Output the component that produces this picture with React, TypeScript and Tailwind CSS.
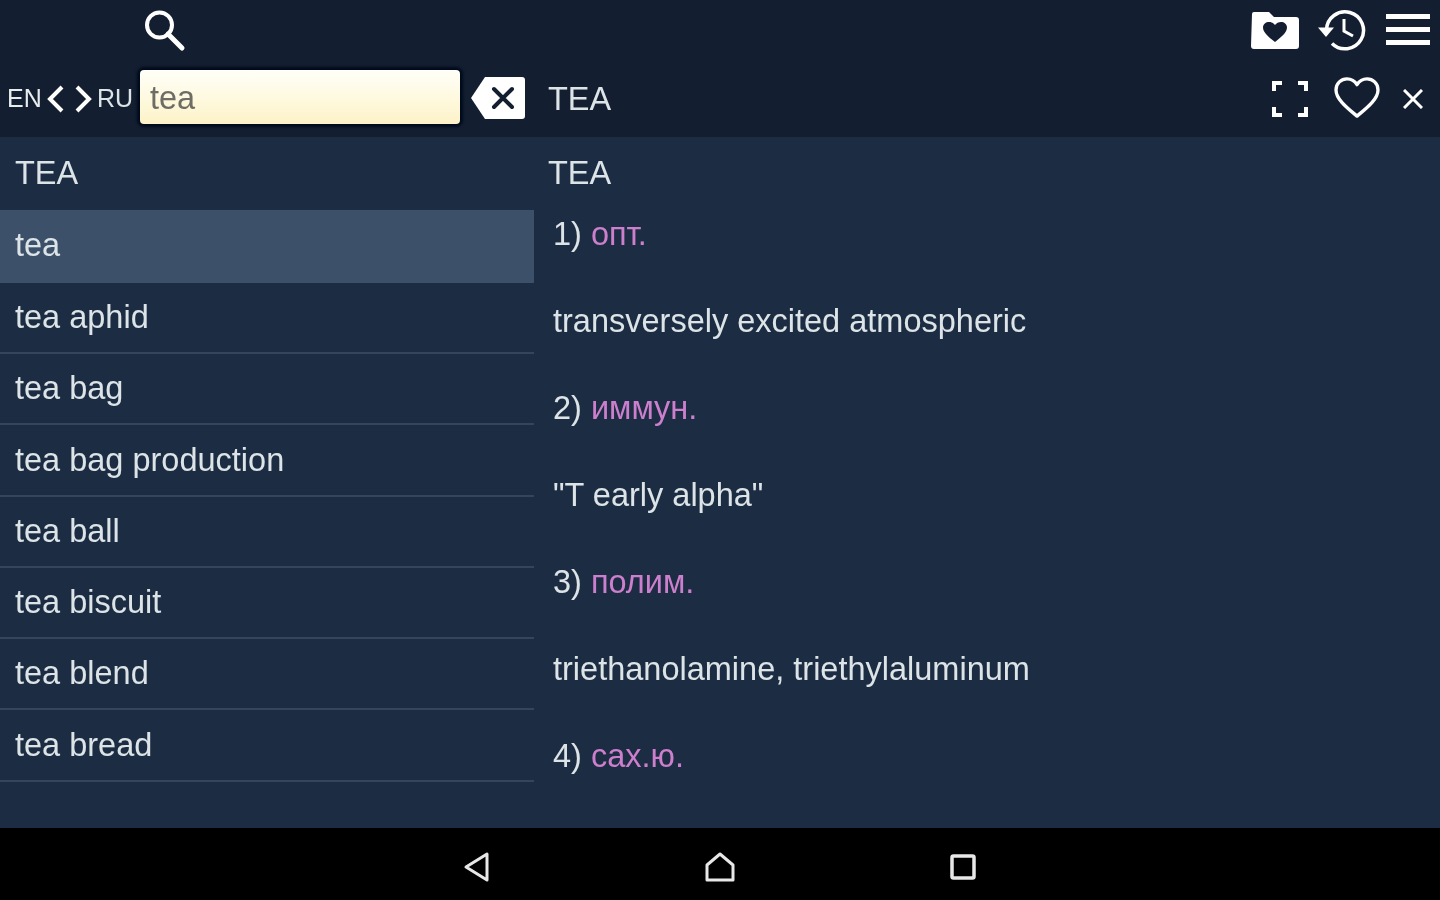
const F = "font-['Liberation_Sans',Arial,sans-serif]";

const rows = ["tea aphid", "tea bag", "tea bag production", "tea ball", "tea biscuit", "tea blend", "tea bread"];

const defs: [string, string, string][] = [
  ["1)", "опт.", "transversely excited atmospheric"],
  ["2)", "иммун.", "\"T early alpha\""],
  ["3)", "полим.", "triethanolamine, triethylaluminum"],
];

function Search() {
  return (
    <svg width="44" height="44" viewBox="0 0 44 44" fill="none" stroke="#fff" strokeWidth="4">
      <circle cx="17.5" cy="17" r="12.5" />
      <path d="M26 26l14 14" strokeWidth="5" strokeLinecap="round" />
    </svg>
  );
}

function FolderHeart() {
  return (
    <svg width="50" height="38" viewBox="0 0 50 38">
      <path d="M2 3a2 2 0 0 1 2-2h15l5 5h22a3 3 0 0 1 3 3v26a3 3 0 0 1-3 3H4a3 3 0 0 1-3-3z" fill="#fff" />
      <path d="M25 31 C20 27 13 22 13 16.5 C13 13 16 11 19 11 C21.500 11 23.500 12 25 14 C26.500 12 28.500 11 31 11 C34 11 37 13 37 16.500 C37 22 30 27 25 31z" fill="#131f30" />
    </svg>
  );
}

function History() {
  return (
    <svg width="50" height="44" viewBox="0 0 50 44" fill="none" stroke="#fff" strokeWidth="3.500">
      <path d="M10.500 22A18.500 18.500 0 1 1 16 35.500" />
      <path d="M2 19.500h16l-8 9.500z" fill="#fff" stroke="none" />
      <path d="M28 11v12l9 5" strokeWidth="3" />
    </svg>
  );
}

function Backspace() {
  return (
    <svg width="56" height="44" viewBox="0 0 56 44">
      <path d="M15 1h37a3 3 0 0 1 3 3v36a3 3 0 0 1-3 3H15L1 22z" fill="#fff" />
      <path d="M24 13l18 18M42 13L24 31" stroke="#131f30" strokeWidth="4" strokeLinecap="round" />
    </svg>
  );
}

function Corners() {
  return (
    <svg width="36" height="36" viewBox="0 0 36 36" fill="none" stroke="#fff" strokeWidth="4">
      <path d="M2 10V2h8M26 2h8v8M2 26v8h8M26 34h8v-8" />
    </svg>
  );
}

function HeartOutline() {
  return (
    <svg width="48" height="42" viewBox="0 0 48 44" fill="none" stroke="#fff" strokeWidth="3.500" strokeLinejoin="round">
      <path d="M24 41C16 34 2 24 2 13.500 C2 6.500 7.500 2 13.500 2 C18 2 21.500 4 24 8 C26.500 4 30 2 34.500 2 C40.500 2 46 6.500 46 13.500 C46 24 32 34 24 41z" />
    </svg>
  );
}

export default function App() {
  return (
    <div className={`${F} w-[1440px] h-[900px] flex flex-col overflow-hidden bg-[#1c2c42] text-[#dde4e8] blur-[0.5px]`}>
      <header className="h-[137px] shrink-0 bg-[#131f30] flex flex-col">
        <div className="h-[60px] shrink-0 flex items-center justify-between">
          <div className="ml-[142px]"><Search /></div>
          <div className="flex items-center gap-[16px] mr-[10px]">
            <FolderHeart />
            <History />
            <div className="w-[44px] flex flex-col gap-[8px] ml-[4px] mb-[2px]">
              <div className="h-[5px] bg-white" />
              <div className="h-[5px] bg-white" />
              <div className="h-[5px] bg-white" />
            </div>
          </div>
        </div>
        <div className="flex-1 flex items-center">
          <div className="w-[534px] shrink-0 flex items-center">
            <span className="ml-[7px] text-[25px] w-[36px] text-[#e8ecef]">EN</span>
            <svg className="ml-[1px]" width="24" height="30" viewBox="0 0 24 30" fill="none" stroke="#fff" strokeWidth="4"><path d="M18 3L6 15l12 12" /></svg>
            <svg className="ml-[3px]" width="24" height="30" viewBox="0 0 24 30" fill="none" stroke="#fff" strokeWidth="4"><path d="M6 3l12 12L6 27" /></svg>
            <span className="ml-[2px] text-[25px] w-[43px] text-[#dde4e8]">RU</span>
            <div className="w-[320px] h-[54px] mb-[3px] rounded bg-gradient-to-b from-[#fffff8] to-[#fdf3c8] shadow-[0_0_3px_3px_#000a1e] flex items-center pl-[10px] pt-[3px] text-[32.5px] text-[#6d6d66]">tea</div>
            <div className="ml-[10px] mb-[1px]"><Backspace /></div>
          </div>
          <span className="ml-[14px] mt-[1px] text-[32.5px] leading-none">TEA</span>
          <div className="ml-auto flex items-center mr-[15px]">
            <Corners />
            <div className="ml-[25px] mb-[2px]"><HeartOutline /></div>
            <svg className="ml-[22px] mr-[2px]" width="20" height="20" viewBox="0 0 20 20" fill="none" stroke="#fff" strokeWidth="3"><path d="M1 1l18 18M19 1L1 19" /></svg>
          </div>
        </div>
      </header>
      <main className="flex-1 flex min-h-0">
        <aside className="w-[534px] shrink-0 text-[32.5px]">
          <div className="h-[73px] flex items-center pl-[15px]">TEA</div>
          <div className="h-[72.7px] bg-[#3c5069] flex items-center pl-[15px] pb-[2px]">tea</div>
          {rows.map((r) => (
            <div key={r} className="h-[71.300px] border-b-2 border-[#34465c] flex items-center pl-[15px]">{r}</div>
          ))}
        </aside>
        <section className="flex-1 text-[32.5px] pl-[14px] min-w-0">
          <div className="h-[73px] flex items-center">TEA</div>
          <div className="pl-[5px]">
            {defs.map(([n, k, t]) => (
              <div key={n}>
                <div className="h-[48px] mb-[39px] flex items-center"><span>{n}</span><span className="ml-[9px] text-[#cc7fcc]">{k}</span></div>
                <div className="h-[48px] mb-[39px] flex items-center">{t}</div>
              </div>
            ))}
            <div className="h-[48px] flex items-center"><span>4)</span><span className="ml-[9px] text-[#cc7fcc]">сах.ю.</span></div>
          </div>
        </section>
      </main>
      <footer className="h-[72px] shrink-0 bg-black flex items-center justify-center gap-[212px] pt-[6px]">
        <svg width="30" height="32" viewBox="0 0 30 32" fill="none" stroke="#e8e8e8" strokeWidth="3" strokeLinejoin="round"><path d="M25 3v26L4 16z" /></svg>
        <svg width="32" height="32" viewBox="0 0 32 32" fill="none" stroke="#e8e8e8" strokeWidth="3" strokeLinejoin="round"><path d="M16 3L3 14v15h26V14z" /></svg>
        <svg width="30" height="30" viewBox="0 0 30 30" fill="none" stroke="#e8e8e8" strokeWidth="3.500"><rect x="4" y="4" width="22" height="22" rx="1.500" /></svg>
      </footer>
    </div>
  );
}
